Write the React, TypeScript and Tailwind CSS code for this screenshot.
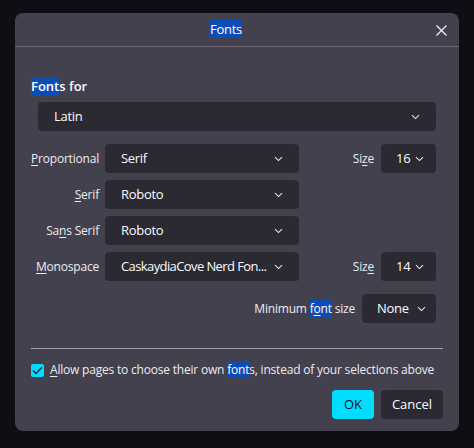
import type { ReactNode } from "react";

const font = { fontFamily: '"Open Sans", "Noto Sans", sans-serif' };

function Chevron() {
  return (
    <svg width="9" height="6" viewBox="0 0 9 6" className="shrink-0">
      <path d="M1 1.2 4.5 4.6 8 1.2" fill="none" stroke="#e6e6ec" strokeWidth="1.1" />
    </svg>
  );
}

function Mark({ children }: { children: ReactNode }) {
  return <span className="bg-[#0b4cb6] text-white">{children}</span>;
}

function U({ children }: { children: ReactNode }) {
  return <span className="underline underline-offset-2">{children}</span>;
}

function Select({
  value,
  className,
  compact,
}: {
  value: string;
  className: string;
  compact?: boolean;
}) {
  return (
    <div
      className={`flex h-[29px] items-center rounded-[4px] bg-[#2b2a33] text-[13px] text-[#fbfbfe] ${
        compact ? "gap-[5px] pl-[15px] pr-[10px]" : "justify-between gap-2 pl-4 pr-4"
      } ${className}`}
    >
      <span className="whitespace-nowrap">{value}</span>
      <Chevron />
    </div>
  );
}

function Row({
  label,
  value,
  size,
  tight,
}: {
  label: ReactNode;
  value: string;
  size?: string;
  tight?: boolean;
}) {
  return (
    <div className="flex items-center">
      <div className="w-[68px] whitespace-nowrap text-right text-[12px] tracking-[-0.2px] text-[#ececf1]">
        {label}
      </div>
      <Select
        value={value}
        className={`ml-[6px] w-[194px] ${tight ? "tracking-[-0.6px]" : "tracking-[-0.3px]"}`}
      />
      {size ? (
        <>
          <div className="ml-auto mr-[7px] text-[12px] tracking-[-0.2px] text-[#ececf1]">
            {size === "16" ? (
              <>
                Si<U>z</U>e
              </>
            ) : (
              <>
                Siz<U>e</U>
              </>
            )}
          </div>
          <Select value={size} compact className="w-[55px] tracking-[-0.3px]" />
        </>
      ) : null}
    </div>
  );
}

export default function App() {
  return (
    <div className="h-[448px] w-[474px] bg-[#0f0e14] pl-[15px] pt-[13px]" style={font}>
      <div className="flex h-[418px] w-[444px] flex-col rounded-[8px] bg-[#42414d] text-[#fbfbfe]">
        <div className="relative flex h-[34px] items-center justify-center border-b border-[#6a6973] pr-[22px]">
          <span className="text-[13px] tracking-[-0.3px]">
            <Mark>Fonts</Mark>
          </span>
          <svg
            width="11"
            height="11"
            viewBox="0 0 11 11"
            className="absolute right-[12px] top-[12px]"
          >
            <path d="M0.5 0.5 10.5 10.5M10.5 0.5 0.5 10.5" stroke="#f0f0f4" strokeWidth="1.3" />
          </svg>
        </div>

        <div className="flex flex-1 flex-col pl-[16px] pr-[23px]">
          <div className="mt-[29px] text-[13px] font-semibold leading-5">
            <Mark>Font</Mark>s for
          </div>
          <Select value="Latin" className="ml-[7px] mt-[6px] h-[28px] tracking-[-0.3px]" />

          <div className="mt-[13px] flex flex-col gap-[7px]">
            <Row label={<><U>P</U>roportional</>} value="Serif" size="16" />
            <Row label={<><U>S</U>erif</>} value="Roboto" />
            <Row label={<>Sa<U>n</U>s Serif</>} value="Roboto" />
            <Row
              label={<><U>M</U>onospace</>}
              value="CaskaydiaCove Nerd Fon..."
              size="14"
              tight
            />
          </div>

          <div className="mt-[13px] flex items-center justify-end">
            <span className="mr-[7px] text-[12px] tracking-[-0.2px] text-[#ececf1]">
              Minimum <Mark>f<U>o</U>nt</Mark> size
            </span>
            <Select value="None" compact className="w-[74px] justify-between tracking-[-0.3px]" />
          </div>

          <div className="mr-[-7px] mt-[25px] h-px bg-[#a3a2ab]" />

          <div className="mt-[12px] flex h-[18px] items-center gap-[6px] text-[12px] tracking-[-0.2px]">
            <span className="flex h-[13px] w-[13px] shrink-0 items-center justify-center rounded-[2px] bg-[#00ddff]">
              <svg width="11" height="9" viewBox="0 0 11 9">
                <path d="M1 4.5 4 7.5 10 1.2" fill="none" stroke="#2b2a33" strokeWidth="1.5" />
              </svg>
            </span>
            <span className="whitespace-nowrap text-[#ececf1]">
              <U>A</U>llow pages to choose their own <Mark>font</Mark>s, instead of your
              selections above
            </span>
          </div>

          <div className="mr-[-7px] mt-[11px] flex justify-end gap-[7px]">
            <button className="h-[29px] w-[42px] rounded-[4px] bg-[#00ddff] text-[13px] text-[#15141a]">
              OK
            </button>
            <button className="h-[29px] w-[62px] rounded-[4px] bg-[#2b2a33] text-[13px] text-[#fbfbfe]">
              Cancel
            </button>
          </div>
        </div>
      </div>
    </div>
  );
}
